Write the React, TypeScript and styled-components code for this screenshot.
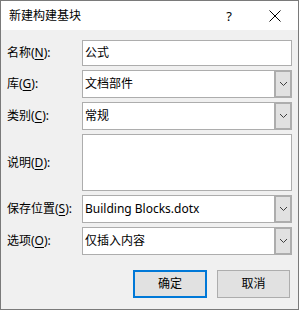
import React from "react";
import styled, { createGlobalStyle } from "styled-components";

const Global = createGlobalStyle`
  html, body { margin: 0; padding: 0; background: #ffffff; }
  * { box-sizing: border-box; }
`;

const FONT = `"Noto Sans", "Noto Sans CJK SC", sans-serif`;

const Window = styled.div`
  width: 299px;
  height: 310px;
  border: 1px solid #7a7a7a;
  background: #f0f0f0;
  display: flex;
  flex-direction: column;
  font-family: ${FONT};
  font-size: 12px;
  color: #000;
`;

const TitleBar = styled.div`
  height: 29px;
  background: #ffffff;
  display: flex;
  align-items: center;
  padding-left: 8px;
`;

const Title = styled.div`
  flex: 1;
  font-size: 12px;
  line-height: 14px;
`;

const TitleButton = styled.div<{ $w: number }>`
  width: ${(p) => p.$w}px;
  height: 29px;
  display: flex;
  align-items: center;
  justify-content: center;
  font-size: 13px;
`;

const Body = styled.div`
  flex: 1;
  padding: 10px 6px 0 6px;
  display: flex;
  flex-direction: column;
`;

const Form = styled.div`
  display: grid;
  grid-template-columns: 75px 210px;
  row-gap: 4px;
`;

const Label = styled.div<{ $h: number }>`
  height: ${(p) => p.$h}px;
  display: flex;
  align-items: center;
  white-space: nowrap;
  line-height: 14px;
`;

const U = styled.span`
  text-decoration: underline;
  text-underline-offset: 2px;
`;

const TextBox = styled.div<{ $h: number }>`
  height: ${(p) => p.$h}px;
  border: 1px solid #adadad;
  background: #ffffff;
  display: flex;
  align-items: center;
  padding-left: 2px;
  line-height: 14px;
`;

const Combo = styled.div`
  height: 28px;
  border: 1px solid #adadad;
  background: #ffffff;
  display: flex;
  align-items: stretch;
`;

const ComboText = styled.div`
  flex: 1;
  display: flex;
  align-items: center;
  padding-left: 2px;
  line-height: 14px;
  white-space: nowrap;
`;

const ComboButton = styled.div`
  width: 17px;
  background: #e1e1e1;
  border-left: 1px solid #adadad;
  box-shadow: inset 0 0 0 1px #adadad;
  display: flex;
  align-items: center;
  justify-content: center;
`;

const Buttons = styled.div`
  margin-top: 15px;
  display: flex;
  justify-content: flex-end;
  gap: 10px;
  padding-right: 2px;
`;

const Btn = styled.div<{ $primary?: boolean }>`
  width: ${(p) => (p.$primary ? 74 : 73)}px;
  height: 28px;
  background: #e1e1e1;
  border: ${(p) => (p.$primary ? "2px solid #0078d7" : "1px solid #adadad")};
  display: flex;
  align-items: center;
  justify-content: center;
  line-height: 14px;
`;

const Chevron = () => (
  <svg width="9" height="6" viewBox="0 0 9 6">
    <path d="M1 1 L4.5 4.5 L8 1" stroke="#404040" strokeWidth="1" fill="none" />
  </svg>
);

const Close = () => (
  <svg width="12" height="12" viewBox="0 0 12 12">
    <path d="M0.5 0.5 L11.5 11.5 M11.5 0.5 L0.5 11.5" stroke="#000" strokeWidth="1" fill="none" />
  </svg>
);

const ComboField: React.FC<{ value: string }> = ({ value }) => (
  <Combo>
    <ComboText>{value}</ComboText>
    <ComboButton>
      <Chevron />
    </ComboButton>
  </Combo>
);

export default function App() {
  return (
    <>
      <Global />
      <Window>
        <TitleBar>
          <Title>新建构建基块</Title>
          <TitleButton $w={46}>?</TitleButton>
          <TitleButton $w={46}>
            <Close />
          </TitleButton>
        </TitleBar>
        <Body>
          <Form>
            <Label $h={26}>
              名称(<U>N</U>):
            </Label>
            <TextBox $h={26}>公式</TextBox>

            <Label $h={28}>
              库(<U>G</U>):
            </Label>
            <ComboField value="文档部件" />

            <Label $h={28}>
              类别(<U>C</U>):
            </Label>
            <ComboField value="常规" />

            <Label $h={57}>
              说明(<U>D</U>):
            </Label>
            <TextBox $h={57} />

            <Label $h={28}>
              保存位置(<U>S</U>):
            </Label>
            <ComboField value="Building Blocks.dotx" />

            <Label $h={28}>
              选项(<U>O</U>):
            </Label>
            <ComboField value="仅插入内容" />
          </Form>
          <Buttons>
            <Btn $primary>确定</Btn>
            <Btn>取消</Btn>
          </Buttons>
        </Body>
      </Window>
    </>
  );
}
